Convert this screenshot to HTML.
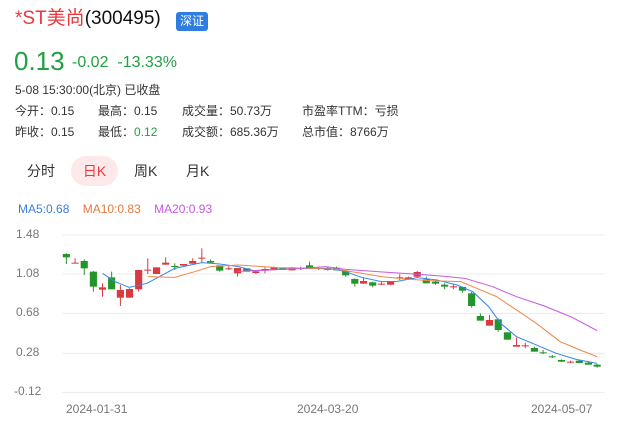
<!DOCTYPE html><html><head><meta charset="utf-8"><style>
body{margin:0;width:623px;height:421px;background:#fff;font-family:"Liberation Sans","Noto Sans CJK SC",sans-serif;position:relative;overflow:hidden;color:#333}
.a{position:absolute;white-space:nowrap}
.y{position:absolute;left:16px;font-size:12px;line-height:14px;color:#777}
.x{position:absolute;top:402px;font-size:12px;line-height:14px;color:#777}
</style></head><body>
<div class="a" style="left:15px;top:8px;font-size:19px;line-height:22px"><span style="color:#e8383d">*ST美尚</span><span style="color:#111">(300495)</span></div>
<div class="a" style="left:176px;top:12px;width:32px;height:19px;background:#2f7de1;border-radius:3px;color:#fff;font-size:12px;line-height:19px;text-align:center">深证</div>
<div class="a" style="left:14px;top:46px;font-size:26px;line-height:30px;color:#1fa042">0.13</div>
<div class="a" style="left:72px;top:53px;font-size:16px;line-height:20px;color:#1fa042">-0.02&nbsp;&nbsp;-13.33%</div>
<div class="a" style="left:15px;top:82px;font-size:12px;line-height:16px">5-08 15:30:00(北京) 已收盘</div>
<div class="a" style="left:15px;top:103px;font-size:12px;line-height:16px">今开：0.15</div>
<div class="a" style="left:98px;top:103px;font-size:12px;line-height:16px">最高：0.15</div>
<div class="a" style="left:182px;top:103px;font-size:12px;line-height:16px">成交量：50.73万</div>
<div class="a" style="left:302px;top:103px;font-size:12px;line-height:16px">市盈率TTM：亏损</div>
<div class="a" style="left:15px;top:124px;font-size:12px;line-height:16px">昨收：0.15</div>
<div class="a" style="left:98px;top:124px;font-size:12px;line-height:16px">最低：<span style="color:#1fa042">0.12</span></div>
<div class="a" style="left:182px;top:124px;font-size:12px;line-height:16px">成交额：685.36万</div>
<div class="a" style="left:302px;top:124px;font-size:12px;line-height:16px">总市值：8766万</div>
<div class="a" style="left:27px;top:162px;font-size:14px;line-height:18px">分时</div>
<div class="a" style="left:71px;top:156px;width:47px;height:30px;border-radius:15px;background:#fde9e9;color:#e8383d;font-size:14px;line-height:30px;text-align:center">日K</div>
<div class="a" style="left:134px;top:162px;font-size:14px;line-height:18px">周K</div>
<div class="a" style="left:186px;top:162px;font-size:14px;line-height:18px">月K</div>
<div class="a" style="left:18px;top:202px;font-size:12px;line-height:14px"><span style="color:#3a7de0">MA5:0.68</span>&nbsp;&nbsp;&nbsp;&nbsp;<span style="color:#e8783a">MA10:0.83</span>&nbsp;&nbsp;&nbsp;&nbsp;<span style="color:#c658e0">MA20:0.93</span></div>
<div class="y" style="top:227px">1.48</div><div class="y" style="top:266px">1.08</div><div class="y" style="top:305px">0.68</div><div class="y" style="top:345px">0.28</div><div class="y" style="top:384px;left:14px">-0.12</div>
<div class="x" style="left:66px">2024-01-31</div><div class="x" style="left:297px">2024-03-20</div><div class="x" style="left:531px">2024-05-07</div>
<svg class="a" style="left:0;top:200px" width="623" height="221" viewBox="0 0 1568 663" preserveAspectRatio="none">
<g stroke="#e6e6e6" stroke-width="2.5"><line x1="157" x2="1522" y1="105" y2="105"/><line x1="157" x2="1522" y1="222" y2="222"/><line x1="157" x2="1522" y1="340" y2="340"/><line x1="157" x2="1522" y1="460" y2="460"/><line x1="157" x2="1522" y1="577" y2="577"/></g>
<g id="c"></g>
<g fill="none" stroke-width="3">
<polyline stroke="#3a87e8" points="258,220 290,245 325,262 370,250 440,205 508,188 553,192 600,200 640,212 690,208 760,205 830,205 870,215 910,232 960,245 1000,244 1050,233 1100,240 1150,255 1190,275 1230,320 1260,370 1300,410 1340,430 1400,460 1450,478 1503,490"/>
<polyline stroke="#ee8a4a" points="372,230 440,232 490,215 530,200 600,195 700,203 780,205 850,208 900,218 960,230 1020,237 1080,242 1160,245 1200,265 1250,290 1300,330 1350,370 1410,425 1460,450 1503,470"/>
<polyline stroke="#c75be2" points="598,214 680,210 760,205 820,200 870,208 950,215 1040,222 1110,228 1170,235 1240,260 1300,290 1370,318 1440,352 1503,392"/>
</g>
</svg>
<script>
var d=[[167,'g',162,172,160,192],[189,'r',188,190,175,190],[212,'g',183,205,178,225],[235,'g',215,260,213,275],[258,'r',262,269,250,290],[281,'g',232,268,215,268],[303,'r',270,293,255,318],[326,'r',267,293,265,293],[349,'r',210,268,210,275],[372,'r',209,212,175,222],[394,'r',202,222,202,222],[417,'r',188,194,172,194],[440,'g',198,200,190,210],[462,'r',192,197,192,197],[485,'r',183,191,175,191],[508,'r',173,175,145,188],[530,'g',183,188,178,190],[553,'g',196,212,196,215],[576,'r',205,207,195,210],[598,'r',204,220,204,230],[621,'g',205,215,205,215],[644,'r',214,219,212,222],[667,'r',207,212,202,220],[690,'r',202,208,200,210],[712,'g',204,210,204,210],[735,'r',202,211,202,211],[757,'r',204,206,200,210],[779,'g',196,203,185,203],[802,'r',204,206,200,210],[825,'r',207,209,200,212],[847,'g',203,211,200,211],[870,'g',212,226,210,230],[893,'g',237,251,235,260],[915,'r',243,251,232,251],[938,'g',247,257,245,262],[960,'r',251,253,245,255],[983,'r',244,254,244,256],[1006,'r',232,234,223,240],[1028,'r',232,237,230,240],[1050,'r',216,230,213,232],[1073,'g',238,250,230,250],[1096,'g',245,251,240,254],[1119,'g',254,260,250,268],[1141,'r',259,261,252,268],[1164,'g',261,272,259,278],[1187,'g',280,318,276,323],[1209,'g',348,362,340,362],[1232,'r',360,377,345,377],[1254,'g',358,390,356,395],[1277,'g',397,419,397,419],[1300,'r',435,440,413,440],[1322,'r',436,438,428,445],[1345,'g',444,455,440,455],[1367,'g',457,459,450,462],[1390,'g',469,471,465,474],[1413,'g',480,485,478,486],[1436,'r',485,487,482,489],[1458,'g',482,489,480,490],[1481,'g',488,494,486,494],[1503,'g',494,500,492,503]];
var s='';d.forEach(function(c){var col=c[1]=='g'?'#23962b':'#d83a3f';s+='<line x1="'+c[0]+'" x2="'+c[0]+'" y1="'+c[4]+'" y2="'+c[5]+'" stroke="'+col+'" stroke-width="2.5"/><rect x="'+(c[0]-9)+'" y="'+c[2]+'" width="18" height="'+Math.max(c[3]-c[2],3)+'" fill="'+col+'"/>';});
document.getElementById('c').innerHTML=s;
</script>
</body></html>
